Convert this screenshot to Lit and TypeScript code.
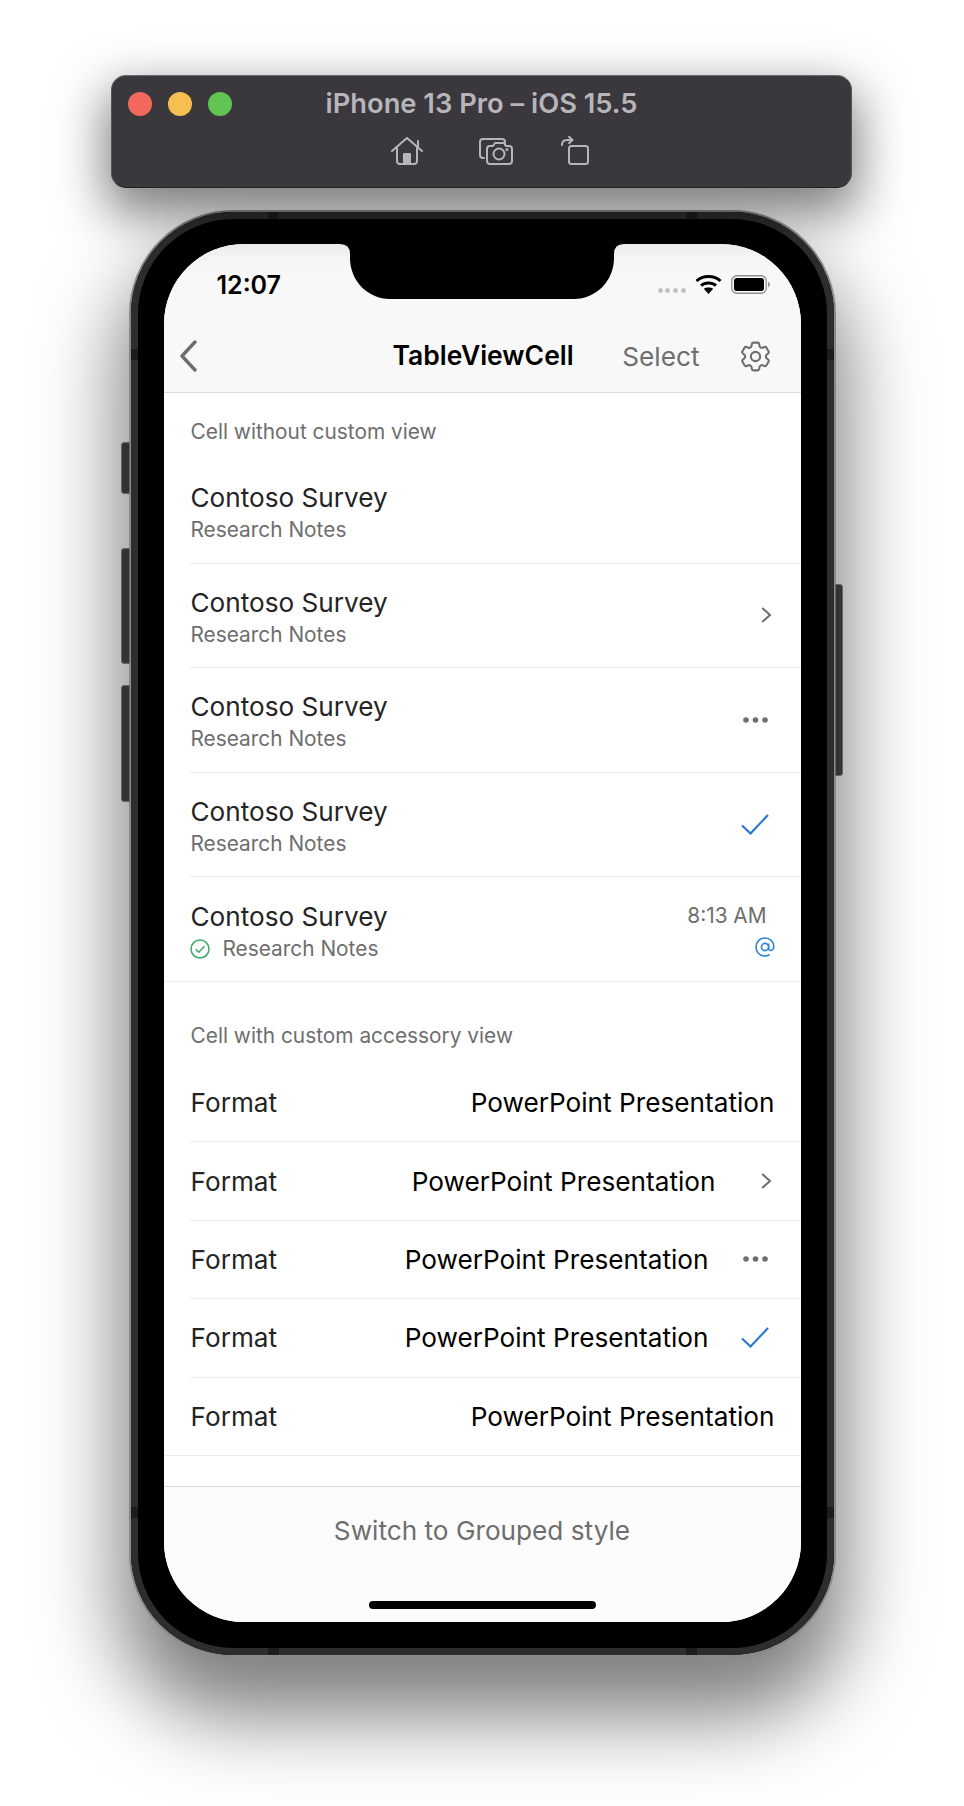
import { LitElement, html, css } from "lit";
import { customElement } from "lit/decorators.js";

type Kind = "chev" | "dots" | "check" | "";

const icons = {
  chev: html`<svg class="ic-chev" viewBox="0 0 10 16"><path d="M1.2 1 L9 8 L1.2 15" /></svg>`,
  dots: html`<svg class="ic-dots" viewBox="0 0 25 6"><circle cx="3" cy="3" r="2.8" /><circle cx="12.5" cy="3" r="2.8" /><circle cx="22" cy="3" r="2.8" /></svg>`,
  check: html`<svg class="ic-check" viewBox="0 0 28 21"><path d="M1 11.5 L9.5 19.5 L27 1" /></svg>`,
};
const okCircle = html`<svg class="ic-ok" viewBox="0 0 20 20"><circle cx="10" cy="10" r="9" /><path d="M5.8 10.4 L8.8 13.2 L14.4 7.2" /></svg>`;
const at = html`<svg class="ic-at" viewBox="0 0 20 20"><circle cx="10" cy="10" r="3.6" /><path d="M13.6 6.4 V11.6 C13.6 14.4 18.8 14.2 18.8 9.6 C18.8 4.4 14.8 1 10 1 C4.8 1 1 5 1 10 C1 15.2 4.8 19 10 19 C11.8 19 13.2 18.6 14.6 17.8" /></svg>`;

const cells: { acc: Kind; meta: boolean }[] = [
  { acc: "", meta: false },
  { acc: "chev", meta: false },
  { acc: "dots", meta: false },
  { acc: "check", meta: false },
  { acc: "", meta: true },
];
const formats: Kind[] = ["", "chev", "dots", "check", ""];

@customElement("app-root")
export class AppRoot extends LitElement {
  static styles = css`
    :host {
      display: block;
      width: 964px;
      height: 1806px;
      background: #fff;
      overflow: hidden;
      font-family: Inter, "Liberation Sans", sans-serif;
    }
    .page {
      display: flex;
      flex-direction: column;
      align-items: center;
      padding-top: 75px;
    }
    .titlebar {
      width: 741px;
      height: 113px;
      box-sizing: border-box;
      margin-left: -1px;
      background: #3a383d;
      border: 1px solid #55545a;
      border-top-color: #6a696e;
      border-bottom-color: #232226;
      border-radius: 15px;
      padding: 11px 20px 0 16px;
      box-shadow: 0 20px 50px 6px rgba(0, 0, 0, 0.5);
      position: relative;
      z-index: 2;
    }
    .tb-top {
      display: grid;
      grid-template-columns: 1fr auto 1fr;
      align-items: center;
      height: 30px;
    }
    .lights {
      display: flex;
      gap: 16px;
    }
    .light {
      width: 24px;
      height: 24px;
      border-radius: 50%;
    }
    .red { background: #f2695c; }
    .yellow { background: #f6bf4f; }
    .green { background: #61c554; }
    .tb-title {
      color: #b7b5ba;
      font-size: 27.3px;
      font-weight: 600;
      white-space: nowrap;
      margin-left: 4px;
    }
    .tb-icons {
      display: flex;
      justify-content: flex-start;
      align-items: flex-end;
      margin-top: 19px;
      padding-left: 263px;
    }
    .tb-icons svg {
      fill: none;
      stroke: #b7b5ba;
      stroke-width: 2;
      stroke-linecap: round;
      stroke-linejoin: round;
      display: block;
    }
    .cam { margin: 0 48px 0 56px; }
    .phone {
      margin-top: 22px;
      width: 707px;
      height: 1447px;
      box-sizing: border-box;
      position: relative;
      border-radius: 104px;
      background: #000;
      border: 2px solid #8a8a8a;
      box-shadow: 0 50px 80px 10px rgba(0, 0, 0, 0.5);
      padding: 32px 33px;
    }
    .phone::before {
      content: "";
      position: absolute;
      inset: 0;
      border: 7px solid #2d2d2d;
      border-radius: 102px;
      pointer-events: none;
    }
    .ant {
      position: absolute;
      background: #1c1c1c;
    }
    .a1 { left: 137px; top: 0; width: 11px; height: 7px; }
    .a2 { right: 137px; top: 0; width: 11px; height: 7px; }
    .a3 { left: 137px; bottom: 0; width: 11px; height: 7px; }
    .a4 { right: 137px; bottom: 0; width: 11px; height: 7px; }
    .a5 { left: 0; top: 137px; width: 7px; height: 11px; }
    .a6 { right: 0; top: 137px; width: 7px; height: 11px; }
    .a7 { left: 0; bottom: 137px; width: 7px; height: 11px; }
    .a8 { right: 0; bottom: 137px; width: 7px; height: 11px; }
    .btn {
      position: absolute;
      background: #333;
      border: 1px solid #666;
      border-radius: 3px 0 0 3px;
      width: 7px;
    }
    .b1 { left: -10px; top: 230px; height: 50px; }
    .b2 { left: -10px; top: 336px; height: 114px; }
    .b3 { left: -10px; top: 473px; height: 115px; }
    .b4 { right: -9px; top: 372px; height: 190px; width: 6px; border-radius: 0 3px 3px 0; }
    .screen {
      position: relative;
      width: 637px;
      height: 1378px;
      border-radius: 80px;
      overflow: hidden;
      background: #fff;
      display: flex;
      flex-direction: column;
      z-index: 1;
    }
    .notch {
      position: absolute;
      left: 176px;
      top: 0;
      width: 284px;
      height: 55px;
      display: block;
      fill: #000;
    }
    .head {
      height: 149px;
      box-sizing: border-box;
      background: #f8f8f8;
      border-bottom: 1px solid #dcdcdc;
      flex: none;
      display: flex;
      flex-direction: column;
    }
    .status {
      height: 76px;
      display: flex;
      align-items: flex-end;
      justify-content: space-between;
      padding: 0 30px 0 53px;
    }
    .time {
      font-size: 25px;
      font-weight: 600;
      color: #000;
      line-height: 30px;
      margin-bottom: 20px;
    }
    .stat-icons {
      display: flex;
      align-items: center;
      gap: 9px;
      margin-bottom: 26px;
    }
    .sig {
      display: flex;
      gap: 2.6px;
      margin-top: 13px;
    }
    .sig i {
      width: 5px;
      height: 5px;
      border-radius: 50%;
      background: #c4c4c4;
    }
    .nav {
      flex: 1;
      position: relative;
      display: flex;
      align-items: center;
      justify-content: flex-end;
      padding: 0 30px 0 16px;
    }
    .nav .back {
      margin-right: auto;
      width: 17px;
      height: 32px;
      fill: none;
      stroke: #6e6e6e;
      stroke-width: 3.4;
      stroke-linecap: round;
      stroke-linejoin: round;
    }
    .nav .title {
      position: absolute;
      left: 229px;
      font-size: 26.5px;
      font-weight: 600;
      color: #000;
      top: 19px;
    }
    .nav .sel {
      font-size: 26.2px;
      color: #6e6e6e;
      margin-right: 37px;
    }
    .gear {
      width: 37px;
      height: 37px;
      margin: -3px -3px -3px 0;
      fill: none;
      stroke: #6e6e6e;
      stroke-width: 1.35;
    }
    .content {
      flex: 1;
      min-height: 0;
    }
    .sh {
      box-sizing: border-box;
      padding-left: 27px;
      font-size: 20.85px;
      color: #6e6e6e;
      display: flex;
      align-items: flex-end;
    }
    .sh1 { height: 66px; padding-bottom: 15px; }
    .sh2 { height: 82px; padding-bottom: 16px; }
    .cell {
      box-sizing: border-box;
      height: 104.6px;
      margin-left: 26px;
      padding-right: 26px;
      border-bottom: 1px solid #ececec;
      display: flex;
      align-items: center;
      justify-content: space-between;
    }
    .cell.last {
      margin-left: 0;
      padding-left: 26px;
    }
    .titles {
      display: flex;
      flex-direction: column;
      padding: 4px 0 0 1px;
    }
    .cell.last .titles { padding-left: 0; }
    .cell.last .t1 { padding-left: 1px; }
    .t1 {
      font-size: 26.15px;
      color: #242424;
      line-height: 34px;
    }
    .t2 {
      font-size: 20.85px;
      color: #6e6e6e;
      line-height: 28px;
      margin-top: 1px;
      display: flex;
      align-items: center;
      gap: 13px;
    }
    .meta {
      display: flex;
      flex-direction: column;
      align-items: flex-end;
      gap: 7px;
    }
    .when {
      font-size: 20.8px;
      color: #6e6e6e;
      line-height: 28px;
      margin-right: 8px;
    }
    .acc {
      display: block;
      flex: none;
    }
    .acc.chev { margin-right: 4px; }
    .acc.dots { margin-right: 7px; }
    .acc.check { margin-right: 6px; }
    svg.ic-chev {
      width: 10px;
      height: 16px;
      fill: none;
      stroke: #6e6e6e;
      stroke-width: 2;
      display: block;
    }
    svg.ic-dots {
      width: 25px;
      height: 6px;
      fill: #6e6e6e;
      display: block;
    }
    svg.ic-check {
      width: 28px;
      height: 21px;
      fill: none;
      stroke: #2b78d4;
      stroke-width: 2.2;
      display: block;
    }
    svg.ic-ok {
      width: 20px;
      height: 20px;
      fill: none;
      stroke: #3fa768;
      stroke-width: 1.5;
      display: block;
    }
    svg.ic-at {
      width: 20px;
      height: 20px;
      fill: none;
      stroke: #2b88d8;
      stroke-width: 1.6;
      display: block;
    }
    .fmt {
      box-sizing: border-box;
      height: 78.4px;
      margin-left: 26px;
      padding-right: 26px;
      border-bottom: 1px solid #ececec;
      display: flex;
      align-items: center;
      font-size: 26.2px;
      color: #242424;
    }
    .fmt.last {
      margin-left: 0;
      padding-left: 26px;
    }
    .fmt .k { padding-left: 1px; }
    .fmt .v {
      margin-left: auto;
      color: #000;
    }
    .fmt .acc.chev { margin-left: 45px; }
    .fmt .acc.dots { margin-left: 34px; }
    .fmt .acc.check { margin-left: 32px; }
    .foot {
      flex: none;
      height: 136px;
      box-sizing: border-box;
      background: #fcfcfc;
      border-top: 1px solid #dcdcdc;
      display: flex;
      justify-content: center;
      padding-top: 28px;
      font-size: 26.2px;
      color: #6e6e6e;
      position: relative;
    }
    .homebar {
      position: absolute;
      left: 205px;
      bottom: 13px;
      width: 227px;
      height: 8px;
      border-radius: 4px;
      background: #000;
    }
  `;

  private acc(kind: Kind) {
    return kind ? html`<div class="acc ${kind}">${icons[kind]}</div>` : "";
  }

  render() {
    return html`
      <div class="page">
        <div class="titlebar">
          <div class="tb-top">
            <div class="lights">
              <div class="light red"></div>
              <div class="light yellow"></div>
              <div class="light green"></div>
            </div>
            <div class="tb-title">iPhone 13 Pro – iOS 15.5</div>
            <div></div>
          </div>
          <div class="tb-icons">
            <svg width="32" height="28" viewBox="0 0 32 28">
              <path d="M1 14 L16 1 L31 14 M27 10 V4 M6 11 V24 Q6 27 9 27 H23 Q26 27 26 24 V11" />
              <path d="M13 27 V17 H19 V27 Z" fill="#b7b5ba" />
            </svg>
            <svg class="cam" width="34" height="28" viewBox="0 0 34 28">
              <path d="M5 21 H4 Q1 21 1 18 V5 Q1 2 4 2 H23 Q26 2 26 5 V8" />
              <path d="M11 9 H14 L16 6 H25 L27 9 H30 Q33 9 33 12 V24 Q33 27 30 27 H11 Q8 27 8 24 V12 Q8 9 11 9 Z" />
              <circle cx="20" cy="17" r="5.5" />
              <circle cx="28" cy="12.5" r="0.6" />
            </svg>
            <svg width="28" height="29" viewBox="0 0 28 29">
              <rect x="8" y="10" width="19" height="18" rx="2.5" />
              <path d="M1 9 Q1 4 6 4 H11 M8 0.8 L11.5 4 L8 7.2" />
            </svg>
          </div>
        </div>

        <div class="phone">
          <div class="btn b1"></div>
          <div class="btn b2"></div>
          <div class="btn b3"></div>
          <div class="btn b4"></div>
          <div class="ant a1"></div><div class="ant a2"></div><div class="ant a3"></div><div class="ant a4"></div>
          <div class="ant a5"></div><div class="ant a6"></div><div class="ant a7"></div><div class="ant a8"></div>
          <div class="screen">
            <div class="head">
              <div class="status">
                <div class="time">12:07</div>
                <div class="stat-icons">
                  <div class="sig"><i></i><i></i><i></i><i></i></div>
                  <svg width="27" height="20" viewBox="0 0 27 20" fill="none" stroke="#000" stroke-width="3">
                    <path d="M1.5 7 C8 1 19 1 25.5 7" />
                    <path d="M6 11.5 C10 8 17 8 21 11.5" />
                    <path d="M13.5 20 L8.8 14.8 C11 12.9 16 12.9 18.2 14.8 Z" fill="#000" stroke="none" />
                  </svg>
                  <svg width="40" height="19" viewBox="0 0 40 19">
                    <rect x="0.75" y="0.75" width="34.5" height="17.5" rx="5" fill="none" stroke="#8f8f8f" stroke-width="1.3" />
                    <rect x="3" y="3" width="30" height="13" rx="2.8" fill="#000" />
                    <path d="M37 6.5 Q39 7.5 39 9.5 Q39 11.5 37 12.5 Z" fill="#9a9a9a" />
                  </svg>
                </div>
              </div>
              <div class="nav">
                <svg class="back" viewBox="0 0 17 32"><path d="M15 2 L2 16 L15 30" /></svg>
                <div class="title">TableViewCell</div>
                <div class="sel">Select</div>
                <svg class="gear" viewBox="0 0 24 24">
                  <path d="M9.594 3.94c.09-.542.56-.94 1.11-.94h2.593c.55 0 1.02.398 1.11.94l.213 1.281c.063.374.313.686.645.87.074.04.147.083.22.127.325.196.72.257 1.075.124l1.217-.456a1.125 1.125 0 0 1 1.37.49l1.296 2.247a1.125 1.125 0 0 1-.26 1.431l-1.003.827c-.293.241-.438.613-.43.992a7.723 7.723 0 0 1 0 .255c-.008.378.137.75.43.991l1.004.827c.424.35.534.955.26 1.43l-1.298 2.247a1.125 1.125 0 0 1-1.369.491l-1.217-.456c-.355-.133-.75-.072-1.076.124a6.47 6.47 0 0 1-.22.128c-.331.183-.581.495-.644.869l-.213 1.281c-.09.543-.56.94-1.11.94h-2.594c-.55 0-1.019-.398-1.11-.94l-.213-1.281c-.062-.374-.312-.686-.644-.87a6.52 6.52 0 0 1-.22-.127c-.325-.196-.72-.257-1.076-.124l-1.217.456a1.125 1.125 0 0 1-1.369-.49l-1.297-2.247a1.125 1.125 0 0 1 .26-1.431l1.004-.827c.292-.24.437-.613.43-.991a6.932 6.932 0 0 1 0-.255c.007-.38-.138-.751-.43-.992l-1.004-.827a1.125 1.125 0 0 1-.26-1.43l1.297-2.247a1.125 1.125 0 0 1 1.37-.491l1.216.456c.356.133.751.072 1.076-.124.072-.044.146-.086.22-.128.332-.183.582-.495.644-.869l.214-1.28Z" />
                  <circle cx="12" cy="12" r="3" />
                </svg>
              </div>
            </div>

            <div class="content">
              <div class="sh sh1">Cell without custom view</div>
              ${cells.map(
                (c, i) => html`
                  <div class="cell ${i === cells.length - 1 ? "last" : ""}">
                    <div class="titles">
                      <div class="t1">Contoso Survey</div>
                      <div class="t2">${c.meta ? okCircle : ""}<span>Research Notes</span></div>
                    </div>
                    ${c.meta ? html`<div class="meta"><div class="when">8:13 AM</div>${at}</div>` : this.acc(c.acc)}
                  </div>
                `
              )}
              <div class="sh sh2">Cell with custom accessory view</div>
              ${formats.map(
                (a, i) => html`
                  <div class="fmt ${i === formats.length - 1 ? "last" : ""}">
                    <span class="k">Format</span>
                    <span class="v">PowerPoint Presentation</span>
                    ${this.acc(a)}
                  </div>
                `
              )}
            </div>

            <div class="foot">
              <span>Switch to Grouped style</span>
              <div class="homebar"></div>
            </div>

            <svg class="notch" viewBox="0 0 284 55">
              <path d="M0 0 Q10 0 10 10 V14 C10 37 28 55 50 55 H234 C256 55 274 37 274 14 V10 Q274 0 284 0 Z" />
            </svg>
          </div>
        </div>
      </div>
    `;
  }
}
